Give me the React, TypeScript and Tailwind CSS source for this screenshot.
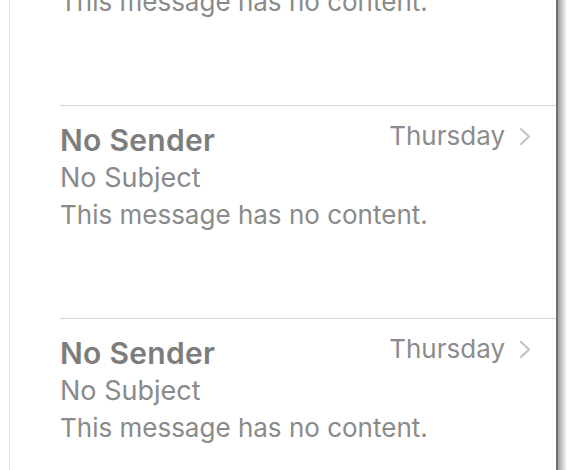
import React from "react";

function Chevron() {
  return (
    <svg width="12" height="19" viewBox="0 0 12 19" className="ml-[14px] mt-[4px] shrink-0">
      <path d="M2 2 L10 9.5 L2 17" fill="none" stroke="#c4c4c8" strokeWidth="2.2" strokeLinecap="round" strokeLinejoin="round" />
    </svg>
  );
}

function Row() {
  return (
    <div className="ml-[50px] border-b border-[#d6d6d6] pt-[16px] pb-[85px] pr-[25px]">
      <div className="flex items-start">
        <div className="flex-1 text-[30px] leading-[37px] font-semibold tracking-[0.01em] text-[#7d7d7d]">No Sender</div>
        <div className="flex items-start mt-[1px]">
          <span className="text-[26px] leading-[25px] text-[#8c8c8c]">Thursday</span>
          <Chevron />
        </div>
      </div>
      <div className="text-[27px] leading-[37px] text-[#8a8a8a]">No Subject</div>
      <div className="text-[26px] leading-[37px] text-[#8a8a8a]">This message has no content.</div>
    </div>
  );
}

export default function App() {
  return (
    <div
      className="w-[568px] h-[470px] overflow-hidden bg-white flex"
      style={{ fontFamily: 'Inter, "Liberation Sans", Arial, sans-serif' }}
    >
      <div className="w-[9px] shrink-0 bg-white" />
      <div className="w-[1px] shrink-0 bg-[#e2e2e2]" />
      <div className="flex-1 min-w-0 bg-white">
        <div className="-mt-[107px]">
          <Row />
          <Row />
          <Row />
        </div>
      </div>
      <div className="w-[2px] shrink-0 bg-[#6e6e6e]" />
      <div className="w-[9px] shrink-0 bg-gradient-to-r from-[#a0a0a0] to-white" />
      <div className="w-[1px] shrink-0 bg-white" />
    </div>
  );
}
